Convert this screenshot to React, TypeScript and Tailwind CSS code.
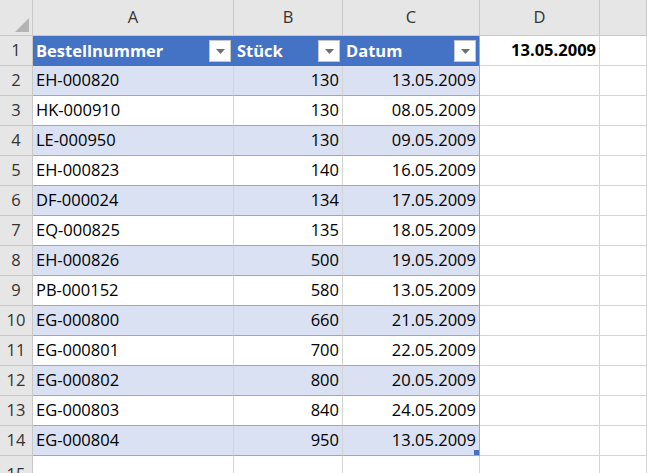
const rows: [string, number, string][] = [
  ['EH-000820', 130, '13.05.2009'],
  ['HK-000910', 130, '08.05.2009'],
  ['LE-000950', 130, '09.05.2009'],
  ['EH-000823', 140, '16.05.2009'],
  ['DF-000024', 134, '17.05.2009'],
  ['EQ-000825', 135, '18.05.2009'],
  ['EH-000826', 500, '19.05.2009'],
  ['PB-000152', 580, '13.05.2009'],
  ['EG-000800', 660, '21.05.2009'],
  ['EG-000801', 700, '22.05.2009'],
  ['EG-000802', 800, '20.05.2009'],
  ['EG-000803', 840, '24.05.2009'],
  ['EG-000804', 950, '13.05.2009'],
];

function Filter() {
  return (
    <span className="ml-auto mr-[3px] flex h-[22px] w-[22px] items-center justify-center border border-[#c6c6c6] bg-white">
      <svg width="9" height="5" viewBox="0 0 9 5"><path d="M0 0h9L4.5 5z" fill="#707070" /></svg>
    </span>
  );
}

const hdr = 'flex items-center justify-center border-r border-b border-[#c8c8c8] bg-[#e6e6e6] text-[#333]';
const rh = 'flex items-center justify-center border-r border-b border-[#c8c8c8] bg-[#e6e6e6] text-[#333]';
const cell = 'flex items-center border-r border-b border-[#d4d4d4] px-[3px]';

export default function App() {
  return (
    <div className="h-[473px] w-[647px] overflow-hidden bg-white text-[16.5px] text-black" style={{ fontFamily: '"Open Sans", "Liberation Sans", sans-serif' }}>
      <div className="grid grid-cols-[33px_201px_109px_137px_120px_1fr] grid-rows-[36px_repeat(15,30px)]">
        <div className={hdr + ' relative'}>
          <svg className="absolute bottom-[3px] right-[3px]" width="14" height="14" viewBox="0 0 14 14"><path d="M14 0v14H0z" fill="#b4b4b4" /></svg>
        </div>
        {['A', 'B', 'C', 'D', ''].map((l, i) => (
          <div key={i} className={hdr}>{l}</div>
        ))}

        <div className={rh}>1</div>
        <div className="flex items-center bg-[#4472c4] pl-[3px] font-bold text-white">Bestellnummer<Filter /></div>
        <div className="flex items-center bg-[#4472c4] pl-[3px] font-bold text-white">Stück<Filter /></div>
        <div className="flex items-center border-r border-[#8ea9db] bg-[#4472c4] pl-[3px] font-bold text-white">Datum<Filter /></div>
        <div className={cell + ' justify-end font-bold'}>13.05.2009</div>
        <div className={cell}></div>

        {rows.map((r, i) => {
          const band = i % 2 === 0 ? 'bg-[#d9e1f2]' : 'bg-white';
          const last = i === rows.length - 1;
          const tc = `flex items-center border-b border-[#8ea9db] px-[3px] ${band}`;
          return [
            <div key={'h' + i} className={rh}>{i + 2}</div>,
            <div key={'a' + i} className={tc + ' border-r border-r-[#d4d4d4]'}>{r[0]}</div>,
            <div key={'b' + i} className={tc + ' justify-end border-r border-r-[#d4d4d4]'}>{r[1]}</div>,
            <div key={'c' + i} className={tc + ' relative justify-end border-r border-r-[#8ea9db]'}>
              {r[2]}
              {last && <span className="absolute bottom-0 right-0 h-[5px] w-[5px] bg-[#4472c4]" />}
            </div>,
            <div key={'d' + i} className={cell}></div>,
            <div key={'e' + i} className={cell}></div>,
          ];
        })}

        <div className={rh + ' items-start pt-[6px]'}>15</div>
        {[0, 1, 2, 3, 4].map((k) => (
          <div key={k} className={cell}></div>
        ))}
      </div>
    </div>
  );
}
